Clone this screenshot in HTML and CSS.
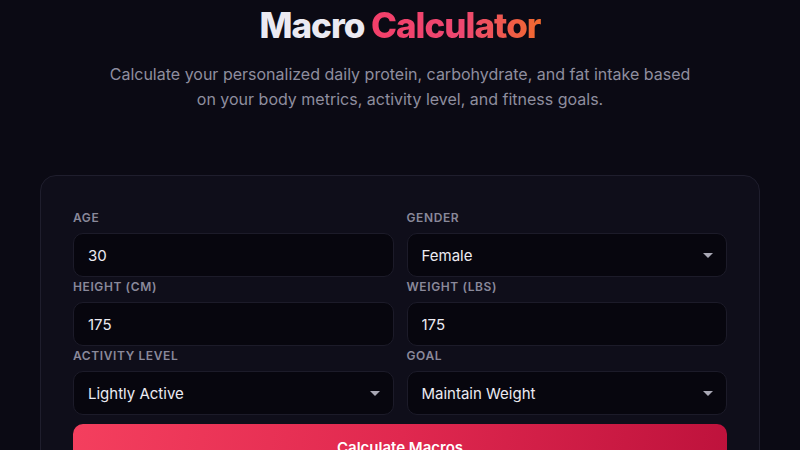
FILE: index.html
```html
<!DOCTYPE html>
<html lang="en">

<head>
    <meta charset="UTF-8">
    <meta name="viewport" content="width=device-width, initial-scale=1.0">
    <title>Macro Calculator</title>
    <link rel="stylesheet" href="styles.css">
</head>

<body>
    <div class="container">
        <header class="header">
            <h1 class="title">Macro <span class="accent">Calculator</span></h1>
            <p class="subtitle">Calculate your personalized daily protein, carbohydrate, and fat intake based on your body metrics, activity level, and fitness goals.</p>
        </header>

        <form class="card">
            <div class="grid">
                <div class="field">
                    <label class="label">Age</label>
                    <input class="input" type="text" value="30">
                </div>
                <div class="field">
                    <label class="label">Gender</label>
                    <div class="select">
                        <span>Female</span>
                        <span class="caret"></span>
                    </div>
                </div>
                <div class="field">
                    <label class="label">Height (cm)</label>
                    <input class="input" type="text" value="175">
                </div>
                <div class="field">
                    <label class="label">Weight (lbs)</label>
                    <input class="input" type="text" value="175">
                </div>
                <div class="field">
                    <label class="label">Activity Level</label>
                    <div class="select">
                        <span>Lightly Active</span>
                        <span class="caret"></span>
                    </div>
                </div>
                <div class="field">
                    <label class="label">Goal</label>
                    <div class="select">
                        <span>Maintain Weight</span>
                        <span class="caret"></span>
                    </div>
                </div>
            </div>
            <button class="button" type="button">Calculate Macros</button>
        </form>
    </div>
</body>

</html>
```

FILE: styles.css
```css
body {
    font-family: Inter, "Noto Sans", sans-serif;
    margin: 0;
    padding: 0;
    background: #0b0a14;
    color: #e8e7ef;
}

.container {
    width: 720px;
    margin: 0 auto;
}

.header {
    text-align: center;
    padding-top: 5px;
}

.title {
    margin: 0;
    font-size: 35px;
    line-height: 40px;
    font-weight: 800;
    letter-spacing: -1px;
    color: #ebeaf2;
}

.accent {
    background: linear-gradient(90deg, #f43f6a 0%, #ec4870 55%, #f26a2e 100%);
    -webkit-background-clip: text;
    background-clip: text;
    color: transparent;
}

.subtitle {
    width: 600px;
    margin: 17px auto 0;
    font-size: 16px;
    line-height: 25px;
    color: #8f8e9f;
}

.card {
    margin-top: 63px;
    padding: 33px 32px 32px;
    background: #0f0e1a;
    border: 1px solid #1f1e2d;
    border-radius: 16px;
}

.grid {
    display: grid;
    grid-template-columns: 1fr 1fr;
    column-gap: 13px;
    row-gap: 1px;
}

.field {
    display: flex;
    flex-direction: column;
}

.label {
    font-size: 12px;
    line-height: 17px;
    font-weight: 600;
    text-transform: uppercase;
    letter-spacing: 0.6px;
    color: #8a899a;
    margin-bottom: 7px;
}

.input,
.select {
    box-sizing: border-box;
    height: 44px;
    padding: 0 14px;
    background: #07060e;
    border: 1px solid #1c1b29;
    border-radius: 10px;
    font-family: inherit;
    font-size: 15px;
    color: #ecebf2;
    outline: none;
}

.select {
    display: flex;
    align-items: center;
    justify-content: space-between;
    padding-right: 13px;
}

.caret {
    width: 0;
    height: 0;
    border-left: 5px solid transparent;
    border-right: 5px solid transparent;
    border-top: 5px solid #a9a8b5;
}

.button {
    width: 100%;
    height: 46px;
    margin-top: 9px;
    border: none;
    border-radius: 10px;
    background: linear-gradient(100deg, #f43f5e 0%, #e0284f 50%, #be123c 100%);
    font-family: inherit;
    font-size: 15px;
    font-weight: 600;
    color: #ffffff;
}
```
